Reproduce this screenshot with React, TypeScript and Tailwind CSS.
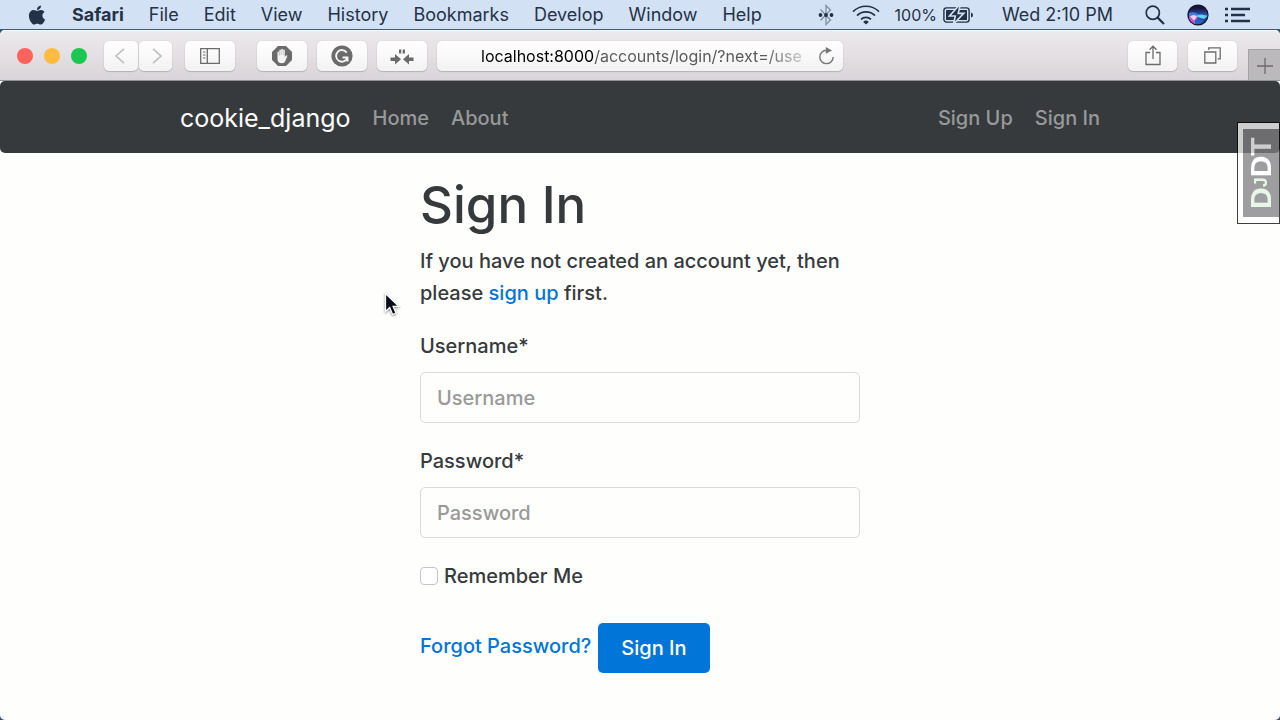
import type { ReactNode } from "react";
import { FaApple } from "react-icons/fa";

const menus = ["File", "Edit", "View", "History", "Bookmarks", "Develop", "Window", "Help"];

function BluetoothIcon() {
  return (
    <svg width="16" height="22" viewBox="0 0 16 22" fill="none" aria-hidden="true">
      <path d="M2.500 5.500 12.500 16 8 20.500V1.500L12.500 6 2.500 16.500" stroke="#8290a3" strokeWidth="1.300" />
      <g fill="#243247">
        <circle cx="2.500" cy="11" r="1.900" />
        <circle cx="8" cy="11" r="1.900" />
        <circle cx="13.500" cy="11" r="1.900" />
      </g>
    </svg>
  );
}

function WifiIcon() {
  return (
    <svg width="28" height="20" viewBox="0 0 28 20" fill="none" stroke="#243247" strokeWidth="1.700" aria-hidden="true">
      <path d="M1 6.600a18.500 18.500 0 0 1 26 0M5 10.600a12.800 12.800 0 0 1 18 0M9 14.400a7.200 7.200 0 0 1 10 0" />
      <path d="M14 19.500l-2.800-2.600a4 4 0 0 1 5.600 0z" fill="#243247" stroke="none" />
    </svg>
  );
}

function BatteryIcon() {
  return (
    <svg width="31" height="18" viewBox="0 0 31 18" aria-hidden="true">
      <rect x="0.900" y="1.900" width="25.200" height="14.200" rx="2.500" fill="none" stroke="#243247" strokeWidth="1.400" />
      <rect x="3" y="4" width="21" height="10" rx="0.500" fill="#243247" />
      <path d="M28 6.500v5q2-.5 2-2.500t-2-2.500z" fill="#243247" />
      <path d="M15.500 0 6.500 10h5.800L10.500 18l10.300-10.600h-5.600L17 0z" fill="#243247" stroke="#d3e1f4" strokeWidth="1.600" />
    </svg>
  );
}

function SearchIcon() {
  return (
    <svg width="20" height="20" viewBox="0 0 20 20" fill="none" stroke="#243247" strokeWidth="1.700" aria-hidden="true">
      <circle cx="7.800" cy="7.800" r="6.600" />
      <path d="M12.600 12.600 19 19" strokeWidth="2.200" />
    </svg>
  );
}

function SiriIcon() {
  return (
    <svg width="22" height="22" viewBox="0 0 22 22" aria-hidden="true">
      <defs>
        <linearGradient id="siri" x1="0" y1="0" x2="0" y2="1">
          <stop offset="0.150" stopColor="#17143f" />
          <stop offset="0.500" stopColor="#2c55b8" />
          <stop offset="1" stopColor="#143b70" />
        </linearGradient>
        <clipPath id="orb"><circle cx="11" cy="11" r="9.500" /></clipPath>
      </defs>
      <circle cx="11" cy="11" r="10.600" fill="#101429" />
      <g clipPath="url(#orb)">
        <circle cx="11" cy="11" r="9.500" fill="url(#siri)" />
        <path d="M2 9q4-2 9 1t10 0v3q-5 2-9 0t-10-1z" fill="#3b7fdc" />
        <path d="M1 13q5-5 10 0l-3 8H2z" fill="#b45bd0" />
        <path d="M3 12.500q4-3 7 0l-3 4z" fill="#f3c8f4" />
        <path d="M9 12q5-3 11 0l-3 3q-5-1-8-3z" fill="#5fd3f2" />
        <path d="M8 16q5-2 9 1l-4 3H8z" fill="#2a5fc4" />
      </g>
    </svg>
  );
}

function ListIcon() {
  return (
    <svg width="25" height="16" viewBox="0 0 25 16" stroke="#243247" strokeWidth="2.400" aria-hidden="true">
      <path d="M0 2h3M0 8h3M0 14h3M6 2h19M6 8h14M6 14h19" />
    </svg>
  );
}

function MenuBar() {
  return (
    <header className="flex h-[30px] shrink-0 items-center border-b border-[#3f5a73] bg-[#d3e1f4] pr-[30px] pl-[27px] text-[18px] leading-6 text-[#243247]">
      <FaApple className="mr-[25px] h-[22px] w-5" aria-label="Apple" />
      <nav className="flex items-center gap-[25px]">
        <span className="font-bold">Safari</span>
        {menus.map((name) => (
          <span key={name}>{name}</span>
        ))}
      </nav>
      <div className="ml-auto flex items-center">
        <BluetoothIcon />
        <span className="ml-[18px]"><WifiIcon /></span>
        <span className="ml-[15px] text-[16px]">100%</span>
        <span className="ml-[6px]"><BatteryIcon /></span>
        <span className="ml-7">Wed 2:10 PM</span>
        <span className="ml-8"><SearchIcon /></span>
        <span className="ml-[22px]"><SiriIcon /></span>
        <span className="ml-4"><ListIcon /></span>
      </div>
    </header>
  );
}

function ToolButton({ label, className, children }: { label: string; className: string; children: ReactNode }) {
  return (
    <button
      type="button"
      aria-label={label}
      className={`flex h-[30px] shrink-0 items-center justify-center rounded-[5px] bg-linear-to-b from-white to-[#f3f2f3] text-[#6b6b6b] shadow-[0_0_1px_rgba(0,0,0,0.25),0_1px_1px_rgba(0,0,0,0.16)] ${className}`}
    >
      {children}
    </button>
  );
}

function Toolbar() {
  return (
    <div className="flex h-[50px] shrink-0 items-center border-t border-[#f9f8f9] bg-linear-to-b from-[#edeaec] to-[#d9d4d9] pl-[17px]">
      <div className="flex gap-[11px]">
        <span className="size-4 rounded-full bg-[#fc635c]" />
        <span className="size-4 rounded-full bg-[#fdbc40]" />
        <span className="size-4 rounded-full bg-[#1cc751]" />
      </div>
      <div className="ml-[17px] flex gap-px">
        <ToolButton label="Back" className="w-[34px]">
          <svg width="14" height="16" viewBox="0 0 14 16" fill="none" stroke="#bdbdbd" strokeWidth="1.600"><path d="M10 .8 2 8l8 7.200" /></svg>
        </ToolButton>
        <ToolButton label="Forward" className="w-[33px]">
          <svg width="14" height="16" viewBox="0 0 14 16" fill="none" stroke="#bdbdbd" strokeWidth="1.600"><path d="M4 .8 12 8l-8 7.200" /></svg>
        </ToolButton>
      </div>
      <ToolButton label="Show sidebar" className="ml-[13px] w-[50px]">
        <svg width="20" height="16" viewBox="0 0 20 16" fill="none" stroke="currentColor" strokeWidth="1.300">
          <path d="M.7.7h18.600v14.600H.7zM7.300.7v14.600" />
          <path d="M3 4h2.500M3 7h2.500M3 10h2.500" strokeWidth="1.100" />
        </svg>
      </ToolButton>
      <div className="ml-[22px] flex gap-[10px]">
        <ToolButton label="Ad blocker" className="w-[50px]">
          <svg width="20" height="20" viewBox="0 0 20 20">
            <path d="M6 0h8l6 6v8l-6 6H6l-6-6V6z" fill="currentColor" />
            <path d="M5.500 6q.7-.9 1.400 0v3.500h.4V4q.8-.9 1.600 0v5h.3V3.200q.9-.9 1.700 0V9h.3V4q.8-.9 1.600 0v7l1.300-1.500q1-.5 1.300.3L13.400 15q-1 2.300-3.400 2.300-4.500 0-4.500-4.500z" fill="#f4f4f4" />
          </svg>
        </ToolButton>
        <ToolButton label="Grammar checker" className="w-[50px]">
          <svg width="22" height="22" viewBox="0 0 22 22">
            <circle cx="11" cy="11" r="10.600" fill="currentColor" />
            <path d="M15.700 7.600A5.800 5.800 0 1 0 16.300 13M11.500 12.500h5v4" fill="none" stroke="#f6f6f6" strokeWidth="1.900" />
          </svg>
        </ToolButton>
        <ToolButton label="Collapse" className="w-[50px]">
          <svg width="24" height="18" viewBox="0 0 24 18" fill="currentColor">
            <path d="M.5 10.500H5V7l6 5.200-6 5.200V14H.5zM23.500 10.500H19V7l-6 5.200 6 5.200V14h4.500zM9 2.500h2.300v4H9zM12.700 2.500H15v4h-2.300z" />
          </svg>
        </ToolButton>
      </div>
      <div className="ml-[10px] flex h-[30px] max-w-[406px] flex-1 items-center rounded-[5px] bg-linear-to-b from-white to-[#f3f2f3] pr-2 pl-11 shadow-[0_0_1px_rgba(0,0,0,0.25),0_1px_1px_rgba(0,0,0,0.16)]">
        <div className="pt-px text-[16px] leading-6 whitespace-nowrap text-[#5a5a5a] mask-r-from-88% mask-r-to-105%">
          <span className="text-black">localhost:8000</span>/accounts/login/?next=/use
        </div>
        <button type="button" aria-label="Reload" className="ml-auto">
          <svg width="17" height="18" viewBox="0 0 17 18" fill="none" stroke="#777777" strokeWidth="1.400">
            <path d="M8.500 3.200a6.700 6.700 0 1 0 6.700 6.700" />
            <path d="M7.800 0 14 3.400 7.800 6.800z" fill="#777777" stroke="none" />
          </svg>
        </button>
      </div>
      <div className="ml-auto flex gap-[11px]">
        <ToolButton label="Share" className="w-[49px]">
          <svg width="16" height="21" viewBox="0 0 16 21" fill="none" stroke="currentColor" strokeWidth="1.300">
            <path d="M5 7.500H1v12h14v-12h-4M8 14V1.500M4.500 4.800 8 1.200l3.500 3.600" />
          </svg>
        </ToolButton>
        <ToolButton label="Show all tabs" className="w-[49px]">
          <svg width="17" height="17" viewBox="0 0 17 17" fill="none" stroke="currentColor" strokeWidth="1.300">
            <path d="M.8 5h11v11h-11zM4.800 3V.8h11.400v11h-2.500" />
          </svg>
        </ToolButton>
      </div>
      <button type="button" aria-label="New tab" className="ml-[11px] flex h-[31px] w-8 shrink-0 items-center justify-center self-end border-t border-l border-[#a5a2a4] bg-[#bbb9bb] pt-[2px]">
        <svg width="16" height="16" viewBox="0 0 16 16" stroke="#6f6a6c" strokeWidth="1.300"><path d="M8 0v16M0 8h16" /></svg>
      </button>
    </div>
  );
}

function Field({ id, label, type }: { id: string; label: string; type: string }) {
  return (
    <div className="mb-[22px]">
      <label htmlFor={id} className="mb-[10px] block leading-8">{label}*</label>
      <input
        id={id}
        type={type}
        placeholder={label}
        className="block h-[51px] w-full rounded-[5px] border border-[#d9dadc] bg-[#fefefd] px-4 pt-px placeholder:text-[#999999] focus:outline-none"
      />
    </div>
  );
}

function DebugHandle() {
  return (
    <div className="absolute top-[41px] right-0 flex h-[102px] w-[43px] border border-black bg-white py-[6px] pl-[5px] opacity-75">
      <div className="flex flex-1 rotate-180 items-center justify-center bg-[#7f7f82] font-['Liberation_Sans',sans-serif] text-[30px]/[34px] font-bold text-white [writing-mode:vertical-rl]">
        <span><span className="text-[#dff5e1]">D<span className="text-[18px]">J</span></span>DT</span>
      </div>
    </div>
  );
}

function Pointer() {
  return (
    <svg className="absolute top-[211px] left-[384px] drop-shadow-[0_1px_1px_rgba(0,0,0,0.45)]" width="16" height="25" viewBox="0 0 16 25" aria-hidden="true">
      <path d="M1.500 1.500v18l4.200-3.900 2.900 6.900 3.400-1.500-2.900-6.600h5.600z" fill="#090b16" stroke="#fff" strokeWidth="1.300" />
    </svg>
  );
}

export default function App() {
  return (
    <div className="flex min-h-screen flex-col bg-[#2d4f75] font-['Inter','Liberation_Sans',sans-serif]">
      <MenuBar />
      <div className="flex flex-1 flex-col overflow-hidden rounded-[5px] bg-[#fefefd]">
        <Toolbar />
        <div className="h-px shrink-0 bg-[#929093]" />
        <div className="relative flex-1 text-[20px] font-medium text-[#373a3c]">
          <nav className="h-[72px] rounded-[5px] bg-[#373a3c] px-5 text-[#98999a]">
            <div className="mx-auto flex h-full max-w-[920px] items-center gap-[22px] pt-[2px]">
              <a href="#" className="text-[25px]/8 font-normal text-white">cookie_django</a>
              <a href="#">Home</a>
              <a href="#">About</a>
              <a href="#" className="ml-auto">Sign Up</a>
              <a href="#">Sign In</a>
            </div>
          </nav>
          <main className="mx-auto max-w-[440px] pt-[22px]">
            <h1 className="text-[51px] leading-[60px]">Sign In</h1>
            <p className="mt-[10px] mb-[21px] leading-8">
              If you have not created an account yet, then please{" "}
              <a href="#" className="text-[#0275d8]">sign up</a> first.
            </p>
            <form>
              <Field id="username" label="Username" type="text" />
              <Field id="password" label="Password" type="password" />
              <div className="flex items-center gap-[6px]">
                <input id="remember" type="checkbox" className="size-[18px] appearance-none rounded-[4px] border border-[#c5c5c8] bg-white" />
                <label htmlFor="remember" className="leading-8">Remember Me</label>
              </div>
              <div className="mt-[31px] flex items-start gap-[7px]">
                <a href="#" className="leading-[46px] text-[#0275d8]">Forgot Password?</a>
                <button type="button" className="h-[50px] rounded-[5px] bg-[#0275d8] px-[23px] text-white">Sign In</button>
              </div>
            </form>
          </main>
          <DebugHandle />
          <Pointer />
        </div>
      </div>
    </div>
  );
}
